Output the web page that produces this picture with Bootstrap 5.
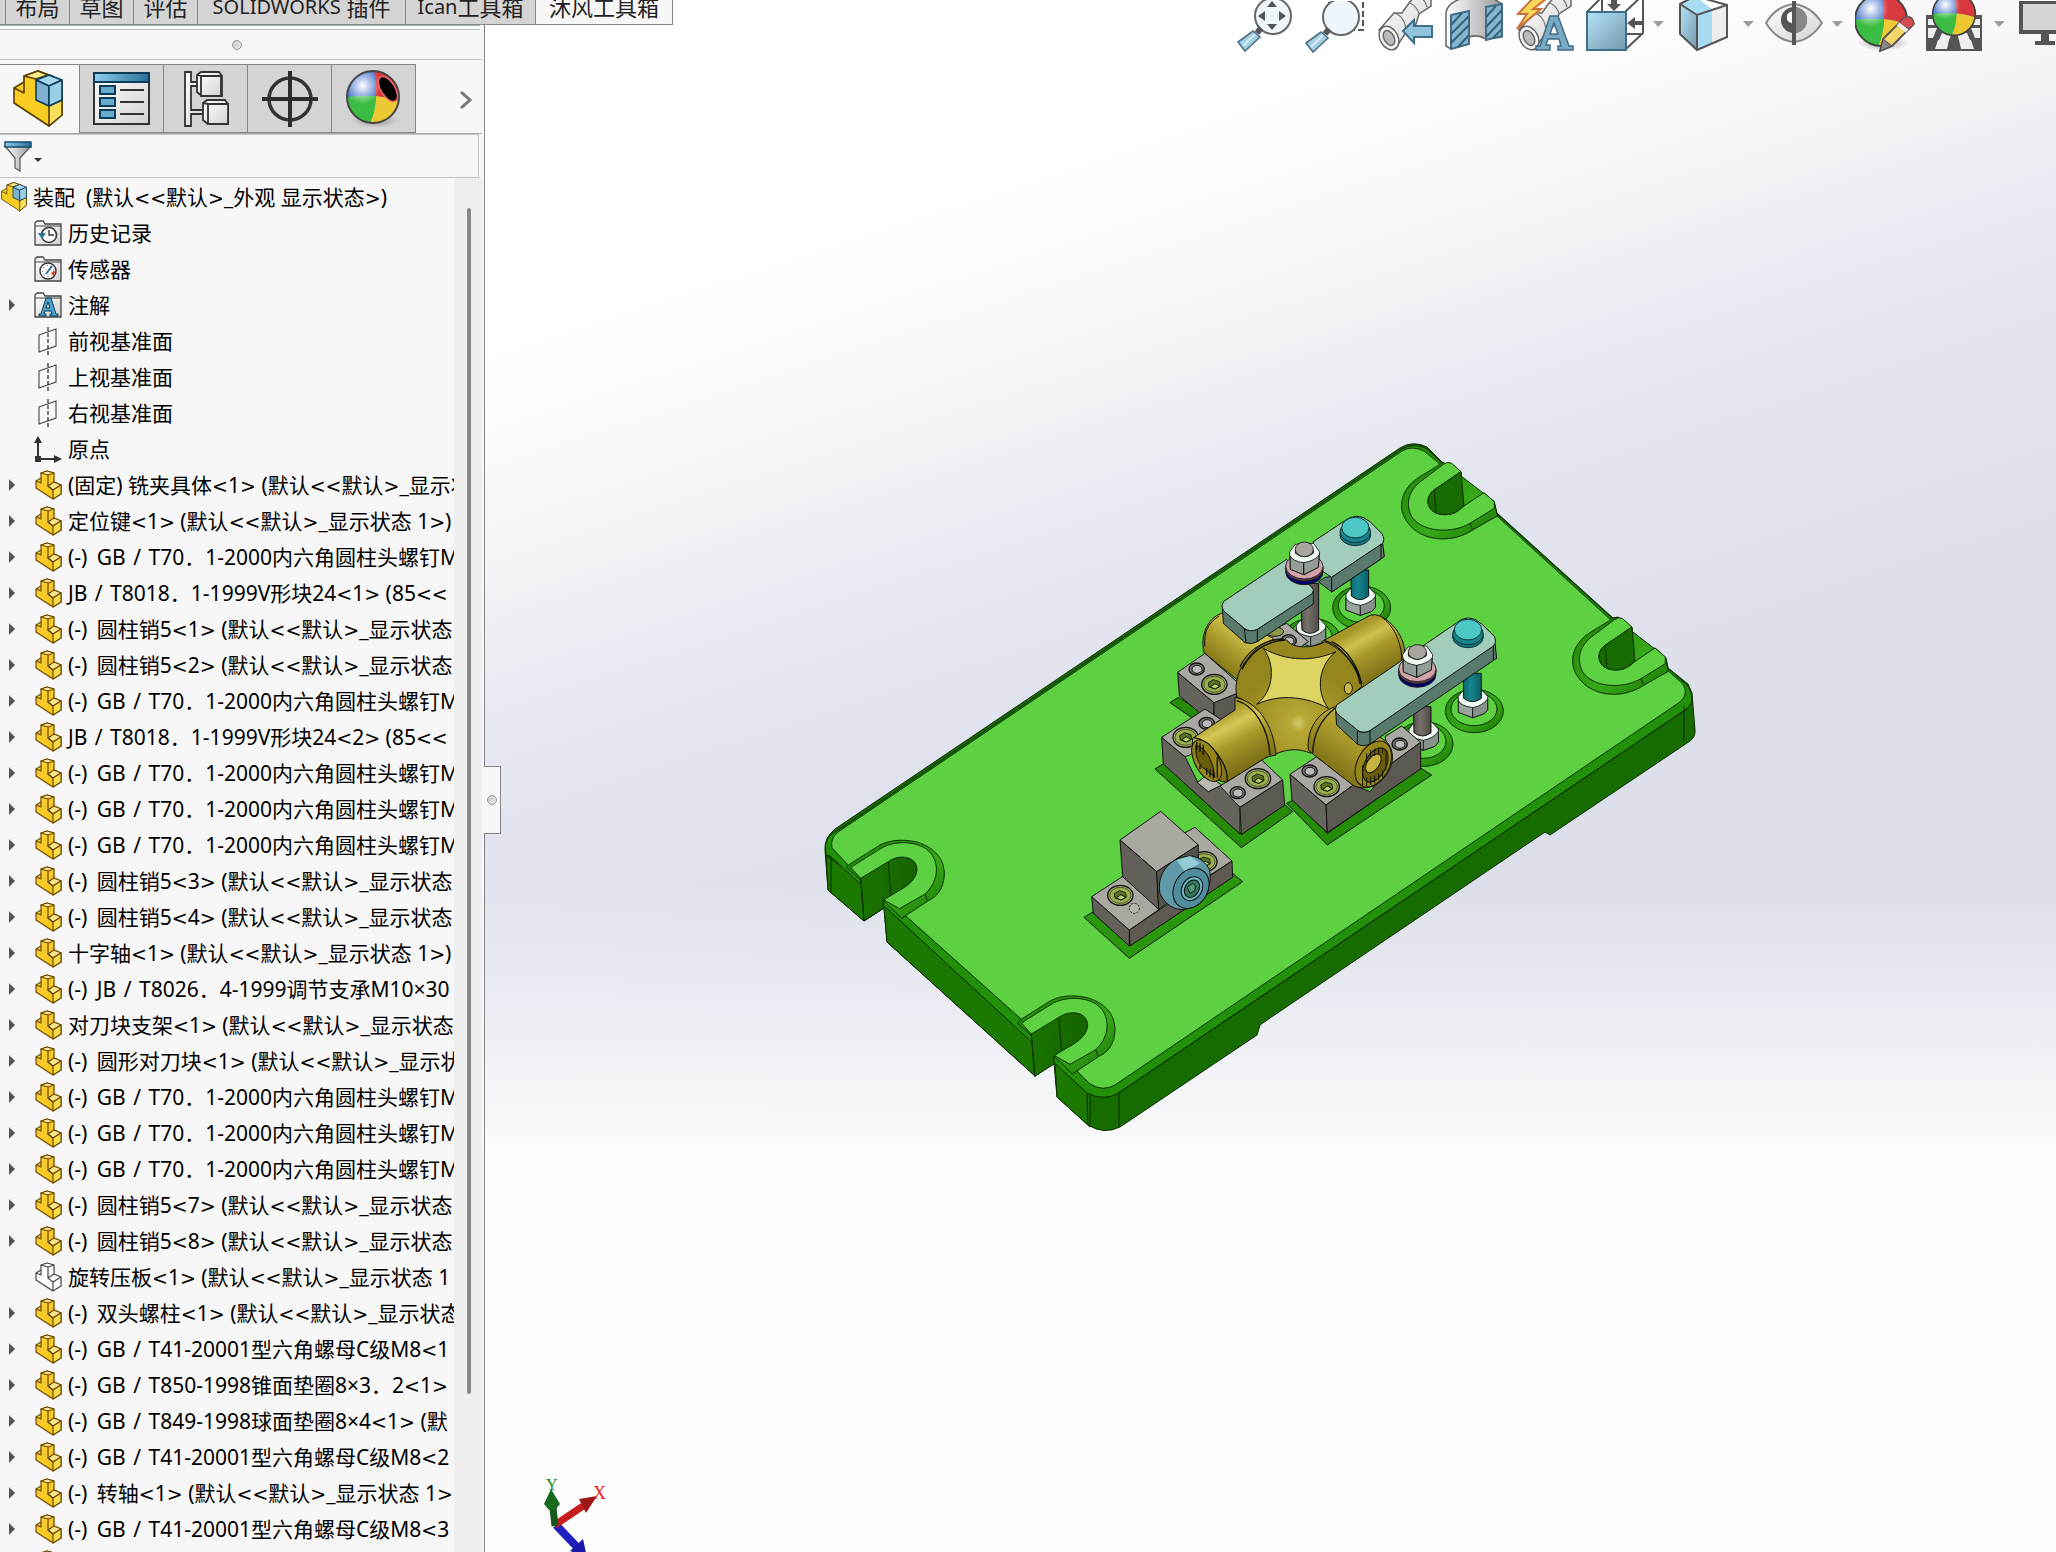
<!DOCTYPE html>
<html lang="zh-CN">
<head>
<meta charset="utf-8">
<meta name="viewport" content="width=device-width, initial-scale=1">
<title>装配 - SOLIDWORKS</title>
<link href="https://cdn.jsdelivr.net/npm/bootstrap@5.3.0/dist/css/bootstrap.min.css" rel="stylesheet">
<style>
:root{--line:#868686;--soft:#c2c2c2;--panel:#f7f7f7;--tab:#d4d4d4}
body{font-family:"Noto Sans","Noto Sans CJK SC",sans-serif;color:#000;background:#fff}
button{font:inherit;color:inherit}
.side{width:485px;background:var(--panel);border-right:1px solid var(--line);z-index:2}
.ribbon{height:25px;width:max-content;background:var(--tab);z-index:3}
.ribbon button{height:25px;border:0;border-left:1px solid var(--line);border-bottom:1px solid var(--line);background:var(--tab);color:#222;font-size:22px;line-height:34px;padding:0 10px;white-space:nowrap;overflow:hidden;display:flex;align-items:flex-end;justify-content:center}
.ribbon button.active{background:var(--panel);border-right:1px solid var(--line)}
.ribbon .first{width:5px;border-left:0;padding:0}
.latin{font-size:20px}
.w-short{width:64px}.w-plug{width:208px}.w-ican{width:130px}.w-mf{width:138px}
.grip{height:30px;margin-right:2px;padding-right:8px;border-bottom:1px solid var(--soft)}
.grip-line{border-top:1px solid #9fb3b5;border-bottom:1px solid var(--soft);height:5px;flex:none}
.knob{width:10px;height:10px;border:1px solid #999;border-radius:50%;background:linear-gradient(135deg,#c4c4c4,#eee)}
.mtabs{height:70px;margin:4px 2px 0 0;border-bottom:1px solid #aaa}
.mtabs button{width:84px;padding:0;border:1px solid var(--line);border-left-width:0;background:var(--tab)}
.mtabs button.active{width:80px;padding-right:3px;background:var(--panel);border-bottom:0}
.mtabs button.more{margin-left:auto;width:32px;border:0;background:none}
.filter{height:44px;margin-right:5px;border:1px solid var(--soft);border-left:0}
.filter button{border:0;background:none;padding:0 0 0 4px}
.tree{overflow:hidden;padding-top:1px}
.node{height:36px;font-size:21px;line-height:36px;white-space:nowrap;color:#000;text-decoration:none;padding-left:8px}
.node.root{padding-left:0}
.node .arrow{width:26px;flex:none}
.node .ico{width:34px;flex:none}
.node.root .ico{width:33px}
.node svg{display:block}
.cmp{font-family:"DejaVu Sans",sans-serif;font-size:19px;line-height:1}
.slash{margin:0 2px}
.fix{margin-right:4px}
.bar{width:28px;background:#efefef;margin-right:2px;flex:none;padding:30px 0 158px}
.thumb{width:4px;height:100%;margin-left:13px;background:#888;border-radius:2px}
.handle{right:-17px;top:766px;width:17px;height:68px;border:1px solid var(--line);border-left:0;background:var(--panel);padding:0}
.view{background:linear-gradient(180deg,rgba(253,253,254,0) 57%,rgba(253,253,254,.5) 66%,#fdfdfe 75%),linear-gradient(162deg,#fff 16%,#f8f8fa 25%,#ecedf3 32%,#e2e5ef 40%,#dde0eb 52%,#dcdfea 60%)}
.tools{height:60px}
.tools button{border:0;background:none;padding:0;width:70px;height:60px;overflow:hidden;display:flex;align-items:flex-start;flex:none}
.tools button svg{flex:none}
.tools button.drop{width:90px}
.tools button.cut{width:41px}
.triad{left:50px;bottom:0}
</style>
<script src="https://cdn.jsdelivr.net/npm/bootstrap@5.3.0/dist/js/bootstrap.bundle.min.js"></script>
</head>
<body class="vh-100 overflow-hidden d-flex">
<svg width="0" height="0" class="position-absolute" aria-hidden="true">
<defs>
<linearGradient id="gy" x1="0" y1="0" x2="1" y2="1"><stop offset="0" stop-color="#fdd23a"/><stop offset="1" stop-color="#f2bf10"/></linearGradient>
<linearGradient id="bl" x1="0" y1="0" x2="1" y2="1"><stop offset="0" stop-color="#b4e2f7"/><stop offset="1" stop-color="#7499ae"/></linearGradient>
<linearGradient id="gr" x1="0" y1="0" x2="1" y2="1"><stop offset="0" stop-color="#fff"/><stop offset="1" stop-color="#d2d2d2"/></linearGradient>
<linearGradient id="hd" x1="0" x2="1"><stop offset="0" stop-color="#8fd0ee"/><stop offset="1" stop-color="#276f95"/></linearGradient>
<linearGradient id="gf" x1="0" x2="1"><stop offset="0" stop-color="#fff"/><stop offset="1" stop-color="#999"/></linearGradient>
<radialGradient id="hl" cx=".3" cy=".28" r=".35"><stop offset="0" stop-color="#fff"/><stop offset="1" stop-color="#fff" stop-opacity="0"/></radialGradient>
<radialGradient id="sh"><stop offset="0" stop-color="#666" stop-opacity=".7"/><stop offset="1" stop-color="#888" stop-opacity="0"/></radialGradient>
<symbol id="part" viewBox="0 0 28 30"><g stroke="#6b4a00" stroke-width="1.2" stroke-linejoin="round"><path fill="url(#gy)" d="M2 11 7 8V3L13 1 20 3V12L27 15V24L19 29 2 18Z"/><path fill="#fbe98c" d="M7 3 13 1 20 3 14 5Z"/><path fill="#fbe98c" d="M14 16 20 12 27 15 19 20Z"/><path fill="#f9dc4b" d="M19 20 27 15V24L19 29Z"/><path fill="none" d="M14 5V16L19 20M2 11 7 13V8"/></g></symbol>
<symbol id="ghost" viewBox="0 0 28 30"><g stroke="#444" stroke-width="1.2" stroke-linejoin="round" fill="#fff"><path d="M2 11 7 8V3L13 1 20 3V12L27 15V24L19 29 2 18Z"/><path fill="none" d="M7 3 14 5 20 3M14 5V16L19 20 27 15M14 16 20 12M19 20V29M2 11 7 13V8"/></g></symbol>
<symbol id="asm" viewBox="0 0 52 58"><g stroke="#5a3d00" stroke-width="1.6" stroke-linejoin="round"><path fill="#f8cc22" d="M2 18 12 12V6L26 1 40 6 50 12V45L37 56 2 33Z"/><path fill="#fbe98c" d="M12 6 26 1 36 5 24 9Z"/><path fill="#f9e05c" d="M37 36 50 30V45L37 56Z"/><path fill="none" d="M2 18 12 23V12"/></g><g stroke="#0a3a5c" stroke-width="1.6" stroke-linejoin="round"><path fill="#a7d6ee" d="M24 10 37 5 50 10 37 16Z"/><path fill="#7eb0d0" d="M24 10 37 16V36L24 30Z"/><path fill="#9acfe8" d="M37 16 50 10V30L37 36Z"/></g></symbol>
<symbol id="folder" viewBox="0 0 28 26"><path d="M1 25V3L3 1H9L11 4H27V25Z" fill="url(#gr)" stroke="#444" stroke-width="1.3"/><path d="M1 6H27" stroke="#444"/></symbol>
<symbol id="plane" viewBox="0 0 28 30"><path d="M5 9 22 3V20L5 26Z" fill="#fafafa" stroke="#444" stroke-width="1.1"/><path d="M14 1V29" stroke="#222" stroke-width="1.2" stroke-dasharray="4 2"/></symbol>
<symbol id="origin" viewBox="0 0 28 30"><path d="M4 25V8M4 25H21" stroke="#333" stroke-width="2"/><path d="M4 2 8 9H0ZM28 25 20 21V29ZM1 22H7V28H1Z" fill="#333"/></symbol>
<symbol id="ball" viewBox="0 0 56 56"><circle cx="28" cy="28" r="26" fill="#4573cc"/><path d="M29 2A26 26 0 0 1 54 32Q42 28 31 27Q31 12 29 2Z" fill="#d9383f"/><path d="M31 27Q42 28 54 32A26 26 0 0 1 25 54Q30 42 31 27Z" fill="#ecc933"/><path d="M2 28Q16 26 31 27Q31 42 25 54A26 26 0 0 1 2 28Z" fill="#3bbd43"/><circle cx="28" cy="28" r="26" fill="url(#hl)" stroke="#444" stroke-width="2"/></symbol>
<symbol id="tube" viewBox="0 0 60 54"><path d="M4 30 19 13H27L34 3 42-6H56V6L44 14 41 24 30 34 20 49Z" fill="url(#gr)" stroke="#666" stroke-width="1.5"/><path d="M19 13Q30 16 31 31M34 3Q40 4 44 13M42-3Q50-2 52 7" fill="none" stroke="#777" stroke-width="1.2"/><ellipse cx="14" cy="38" rx="9" ry="12.500" transform="rotate(-28 14 38)" fill="#f7f7f7" stroke="#666" stroke-width="1.5"/><ellipse cx="14" cy="38" rx="5" ry="8" transform="rotate(-28 14 38)" fill="#bbb" stroke="#666" stroke-width="1.5"/></symbol>
<symbol id="glass" viewBox="0 0 60 54"><circle cx="38" cy="16" r="18" fill="#eef6fb" stroke="#666" stroke-width="2"/><path d="M26 28 22 33" stroke="#555" stroke-width="6"/><path d="M3 42 18 31 25 37 10 51Z" fill="#a3cfe3" stroke="#4f7288" stroke-width="1.600"/><path d="M8 46 20 34" stroke="#d8eef8" stroke-width="2"/></symbol>
</defs></svg>

<aside class="side d-flex flex-column flex-shrink-0 position-relative vh-100">
 <nav class="ribbon d-flex position-relative flex-shrink-0" aria-label="命令管理器">
  <button class="first" aria-label="特征"></button><button class="w-short">布局</button><button class="w-short">草图</button><button class="w-short">评估</button><button class="w-plug"><span class="latin">SOLIDWORKS</span>&nbsp;插件</button><button class="w-ican"><span class="latin">Ican</span>工具箱</button><button class="w-mf active">沐风工具箱</button>
 </nav>
 <div class="grip-line me-1"></div>
 <div class="grip d-flex justify-content-center align-items-center flex-shrink-0"><span class="knob"></span></div>
 <div class="mtabs d-flex flex-shrink-0" role="tablist">
  <button class="active" role="tab" aria-label="设计树"><svg width="52" height="58"><use href="#asm"/></svg></button>
  <button role="tab" aria-label="属性"><svg width="58" height="54" viewBox="0 0 58 54"><rect x="1" y="1" width="55" height="51" fill="url(#gr)" stroke="#333" stroke-width="2"/><rect x="1" y="1" width="55" height="9" fill="url(#hd)" stroke="#0d3c58" stroke-width="2"/><g fill="#65acce" stroke="#0d3c58" stroke-width="2"><path d="M7 14H22V22H7ZM7 26H22V34H7ZM7 38H22V46H7Z"/></g><path d="M27 18H51M27 30H51M27 42H51" stroke="#333" stroke-width="2"/></svg></button>
  <button role="tab" aria-label="配置"><svg width="46" height="58" viewBox="0 0 46 58"><g fill="url(#gr)" stroke="#333" stroke-width="1.800"><path d="M2 2H8V12H16V16H8V40H20V44H8V56H2Z"/><path d="M14 5 18 2H36L39 6V26H19L14 22Z"/><path d="M18 6H38V26H18ZM14 5 18 6" /><path d="M20 33 24 30H42L45 34V54H25L20 50Z"/><path d="M25 34H45V54H25ZM20 33 25 34"/></g></svg></button>
  <button role="tab" aria-label="尺寸"><svg width="58" height="58" viewBox="0 0 58 58"><circle cx="29" cy="29" r="21" fill="none" stroke="#333" stroke-width="3.500"/><path d="M29 1V57M1 29H57" stroke="#2c2c2c" stroke-width="4"/></svg></button>
  <button role="tab" aria-label="显示"><svg width="58" height="60" viewBox="0 0 58 60"><ellipse cx="30" cy="51" rx="24" ry="8" fill="url(#sh)"/><use href="#ball" width="56" height="56"/><ellipse cx="43" cy="20" rx="7" ry="14" transform="rotate(-32 43 20)" fill="#000" stroke="#f3666a" stroke-width="1.500"/></svg></button>
  <button class="more" aria-label="更多"><svg width="14" height="20" viewBox="0 0 14 20"><path d="M2 2 11 10 2 18" fill="none" stroke="#777" stroke-width="3"/></svg></button>
 </div>
 <div class="filter d-flex flex-shrink-0"><button aria-label="过滤器"><svg width="40" height="32" viewBox="0 0 40 32"><path d="M1 6 11 18V28L16 31V18L27 6Z" fill="url(#gf)" stroke="#555" stroke-width="1.200"/><path d="M1 2H27V7H1Z" fill="url(#hd)" stroke="#164b6a" stroke-width="1.400"/><path d="M30 18H38L34 22Z" fill="#333"/></svg></button></div>
 <div class="d-flex flex-grow-1 overflow-hidden">
  <div class="tree flex-grow-1" id="tree" role="tree"></div>
  <div class="bar"><div class="thumb"></div></div>
 </div>
 <button class="handle position-absolute d-flex align-items-center justify-content-center" aria-label="折叠面板"><span class="knob"></span></button>
</aside>

<main class="view d-flex flex-column flex-grow-1 position-relative overflow-hidden">
 <div class="tools d-flex justify-content-end flex-shrink-0">
  <button aria-label="整屏显示全图"><svg width="60" height="54"><use href="#glass"/><path d="M37 1 42 7H32ZM37 30 42 24H32ZM23 16 30 11V21ZM51 16 44 11V21Z" fill="#555"/></svg></button>
  <button aria-label="局部放大"><svg width="62" height="54"><path d="M58 2V30H38M24 2V10" fill="none" stroke="#555" stroke-width="2" stroke-dasharray="6 3"/><use href="#glass" width="60" height="54" x="-2" y="1"/></svg></button>
  <button aria-label="上一视图"><svg width="60" height="54"><use href="#tube"/><path d="M28 31 39 20V26H57V37H39V43Z" fill="#8fc4dd" stroke="#42708a" stroke-width="2"/></svg></button>
  <button aria-label="剖面视图"><svg width="60" height="54" viewBox="0 0 60 54"><path d="M1 12Q4 0 24-3H46L57 4V37L41 39Q32 34 24 37V44L6 49 1 46Z" fill="url(#gf)" stroke="#666" stroke-width="1.500"/><path d="M6 15 24 11V44L6 49ZM41 7 57 4V36L41 40Z" fill="#84b6cf" stroke="#3f6e88" stroke-width="2"/><path d="M6 25 17 13M6 34 24 16M6 43 24 25M13 47 24 35M41 17 51 6M41 27 57 10M41 37 57 20M48 38 57 29" stroke="#34627b" stroke-width="2"/></svg></button>
  <button aria-label="动态注解视图"><svg width="60" height="54" viewBox="0 0 60 54"><use href="#tube" width="60" height="54"/><path d="M20-4 3 14H12L2 29 26 9H18L35-4Z" fill="#fbd85a" stroke="#c9713a" stroke-width="2"/><path d="M35 16H43L54 46H58V50H43V46H46L44 39H33L31 45H35V50H21V46H25ZM35 34H43L39 23Z" fill="#7aa9c2" stroke="#3f6e88" stroke-width="1.500"/></svg></button>
  <button class="drop" aria-label="视图定向"><svg width="86" height="54" viewBox="0 0 86 54"><path d="M2 12 17-3H58V33L40 50M17-3V12M40 12 58-5M40 34H58" fill="#fff" fill-opacity=".5" stroke="#555" stroke-width="2"/><rect x="2" y="12" width="39" height="38" fill="url(#bl)" stroke="#3f6e88" stroke-width="2"/><path d="M26-2H32V4H36L29 11 22 4H26ZM58 21H50V17L42 23 50 29V25H58Z" fill="#555"/><path d="M68 21H79L73 27Z" fill="#9a9da3"/></svg></button>
  <button class="drop" aria-label="显示样式"><svg width="86" height="54" viewBox="0 0 86 54"><path d="M5 4 22 15 52 5V37L22 50 5 34Z" fill="#eee"/><path d="M5 4 20-4 38 10 22 15ZM22 15 37 10V43L22 50Z" fill="#a8dcf2"/><path d="M5 4 22 15V50L5 34Z" fill="url(#bl)"/><path d="M5 4 20-4 52 5V37L22 50 5 34ZM5 4 22 15 52 5M22 15V50" fill="none" stroke="#555" stroke-width="2"/><path d="M68 21H79L73 27Z" fill="#9a9da3"/></svg></button>
  <button class="drop" aria-label="隐藏项目"><svg width="86" height="54" viewBox="0 0 86 54"><path d="M1 23Q11 6 29 4Q46 6 57 23Q46 40 29 42Q11 40 1 23Z" fill="url(#gr)" stroke="#888" stroke-width="2"/><circle cx="29" cy="20" r="13" fill="#555"/><path d="M29 7A13 13 0 0 1 29 33Z" fill="#888"/><path d="M29 11Q20 12 22 20Q26 25 29 22Z" fill="#fff"/><path d="M29 1V45" stroke="#555" stroke-width="4"/><path d="M67 21H78L72 27Z" fill="#9a9da3"/></svg></button>
  <button aria-label="编辑外观"><svg width="62" height="54" viewBox="0 0 62 54"><ellipse cx="28" cy="43" rx="26" ry="8" fill="url(#sh)"/><use href="#ball" x="-2" y="-8" width="56" height="56"/><path d="M25 51 28 39 49 18Q57 14 59 24L37 46Z" fill="#f3d66a" stroke="#555" stroke-width="1.800"/><path d="M49 18Q57 14 59 24L54 29 44 23Z" fill="#d24b50" stroke="#555"/><path d="M25 51 28 39 37 46Z" fill="#888" stroke="#444"/><path d="M43 24 52 31" stroke="#eee" stroke-width="4"/></svg></button>
  <button class="drop" aria-label="应用布景"><svg width="86" height="54" viewBox="0 0 86 54"><path d="M1 15H57V51H1Z" fill="#555"/><path d="M3 19H12V25H3ZM46 19H55V25H46ZM3 28H12L8 38H3ZM46 28H55V38H50ZM17 33H27L24 40H14ZM32 33H42L45 40H34ZM13 40H24L22 49H10ZM34 40H46L49 49H36Z" fill="#eee"/><use href="#ball" x="6" y="-9" width="46" height="46"/><path d="M69 21H80L74 27Z" fill="#9a9da3"/></svg></button>
  <button class="cut" aria-label="视图设定"><svg width="60" height="54" viewBox="0 0 60 54"><rect x="4" y="1" width="56" height="33" fill="#555"/><rect x="8" y="4" width="52" height="26" fill="#d6d6d6"/><path d="M26 34H34V41H40V45H20V41H26Z" fill="#555"/></svg></button>
 </div>
 <div class="flex-grow-1 d-flex justify-content-center align-items-center">
 <svg width="920" height="752" viewBox="811 430 920 752" role="img" aria-label="铣夹具体装配模型">
 <defs>
  <linearGradient id="cyA" gradientUnits="userSpaceOnUse" x1="225" y1="680" x2="315" y2="850"><stop offset="0" stop-color="#a69527"/><stop offset=".25" stop-color="#d5c955"/><stop offset=".5" stop-color="#a8982a"/><stop offset="1" stop-color="#756812"/></linearGradient>
  <linearGradient id="cyB" gradientUnits="userSpaceOnUse" x1="640" y1="420" x2="720" y2="560"><stop offset="0" stop-color="#a69527"/><stop offset=".25" stop-color="#cfc24d"/><stop offset=".5" stop-color="#a8982a"/><stop offset="1" stop-color="#7d7015"/></linearGradient>
  <linearGradient id="cyC" gradientUnits="userSpaceOnUse" x1="300" y1="420" x2="220" y2="520"><stop offset="0" stop-color="#d0c44e"/><stop offset=".5" stop-color="#a8982a"/><stop offset="1" stop-color="#857718"/></linearGradient>
  <linearGradient id="cyD" gradientUnits="userSpaceOnUse" x1="650" y1="710" x2="570" y2="820"><stop offset="0" stop-color="#b8aa36"/><stop offset=".4" stop-color="#a8982a"/><stop offset="1" stop-color="#857718"/></linearGradient>
  <radialGradient id="sad" gradientUnits="userSpaceOnUse" cx="475" cy="700" r="170"><stop offset="0" stop-color="#d8cc70"/><stop offset=".15" stop-color="#b7a836"/><stop offset="1" stop-color="#94861c"/></radialGradient>
  <linearGradient id="wall" x1="0" x2="1"><stop offset="0" stop-color="#1a7400"/><stop offset="1" stop-color="#156300"/></linearGradient>
  <linearGradient id="teal" x1="0" x2="1"><stop offset="0" stop-color="#0d6670"/><stop offset=".4" stop-color="#16868e"/><stop offset="1" stop-color="#0c5e66"/></linearGradient>
  <linearGradient id="rod" x1="0" x2="1"><stop offset="0" stop-color="#55504c"/><stop offset=".4" stop-color="#77716b"/><stop offset="1" stop-color="#4e4a46"/></linearGradient>
  <linearGradient id="ringg" x1="0" y1="0" x2="1" y2="1"><stop offset="0" stop-color="#1f8304"/><stop offset=".6" stop-color="#37a818"/><stop offset="1" stop-color="#187200"/></linearGradient>
  <g id="farslot" stroke="#0b2d00" stroke-width="3"><path fill="url(#ringg)" d="M190 97 120 140C60 175 50 240 85 280C120 330 210 345 278 300L352 258 343 215Z"/><path fill="#5ed142" d="M130 148 190 103Q203 93 215 100L243 125 165 178C130 200 138 254 195 254C225 254 240 238 252 228L312 188 343 215V235L270 280C220 310 130 310 95 260C75 220 85 180 130 148Z"/><path fill="#176b00" d="M243 125 165 178C130 200 138 254 195 254C225 254 235 240 252 228Z"/><path fill="none" d="M163 180 167 246M270 281 278 300"/></g>
  <g id="nearslot" stroke="#0b2d00" stroke-width="3"><path fill="url(#ringg)" d="M110 262 120 252 210 195C250 175 290 180 320 186C380 205 403 240 403 285C400 330 380 350 355 362L275 415 240 380Z"/><path fill="#5ed142" d="M122 262 210 207C250 180 330 180 363 220C392 260 380 310 345 342L268 386 222 360 152 295Z"/><path fill="url(#wall)" d="M152 295 235 245C270 220 322 230 321 270C318 300 290 320 265 333L220 360V385L162 422Z"/><path fill="none" d="M235 245 242 345M345 342 352 362M152 295 162 422"/></g>
  <g id="scr"><ellipse rx="38" ry="30" fill="#aab06a" stroke="#111" stroke-width="4"/><ellipse rx="32" ry="24" fill="#98b04a" stroke="#222" stroke-width="2"/><path d="M-18-5-3-14 16-8 18 6 2 14-16 8Z" fill="#5c7420" stroke="#111" stroke-width="2.500"/><path d="M-12 8 2-2 16 6 2 14Z" fill="#b9d466"/></g>
  <g id="pin"><ellipse rx="23" ry="18" fill="#777" stroke="#111" stroke-width="4"/><ellipse cx="1" cy="1" rx="15" ry="12" fill="#bbb" stroke="#111" stroke-width="3"/></g>
  <g id="nut" stroke="#111" stroke-width="2.500" stroke-linejoin="round"><path d="M-43-18-28-36 24-40 45-18V22L35 34 0 46-43 30Z" fill="#eefaf2"/><path d="M-43-6Q-38 10 0 16V46L-43 30Z" fill="#98a59b"/><path d="M0 16Q30 10 45-10V22L35 34 0 46Z" fill="#87938a"/></g>
  <g id="stack" stroke="#111" stroke-width="2.500"><ellipse cy="28" rx="56" ry="38" fill="#04046e"/><ellipse cy="18" rx="57" ry="38" fill="#5a3c48"/><ellipse cy="11" rx="56" ry="38" fill="#cfa3a9"/><path d="M-44-32-28-55 28-58 46-32 42 14 0 36-42 20Z" fill="#f0faf3"/><path d="M-42-20Q-35-4-2 0V36L-42 20ZM-2 0Q30-5 44-22L42 14 -2 36Z" fill="#929e95"/><path d="M-27-38V-28Q0-8 27-28V-38Z" fill="#6e6a66"/><ellipse cy="-40" rx="27" ry="22" fill="#a9a49e"/></g>
  <g id="cap" stroke="#0a3035" stroke-width="3"><ellipse cy="16" rx="46" ry="32" fill="#17797f"/><ellipse cy="7" rx="46" ry="32" fill="#17858c"/><ellipse cy="-6" rx="41" ry="31" fill="#4bc8c6"/></g>
 </defs>
 <g stroke="#0b2d00" stroke-width="1" stroke-linejoin="round">
  <path fill="#176c00" d="M825 850Q824 838 835 829L1400 448Q1413 440 1427 447L1442 462 1461 472 1463 506 1484 493 1494 502 1497 513 1613 618 1618 617 1632 628 1635 660 1655 648 1666 658 1668 668 1688 684 1692 693 1695 730Q1696 738 1687 743L1550 835 1545 832 1270 1018 1260 1025 1257 1035 1120 1127Q1104 1135 1088 1125L1057 1097 1054 1063 1035 1076 887 942 884 908 864 921 828 890Z"/>
  <path fill="#1b7800" d="M826 855 850 873 884 905 907 927 1020 1030 1054 1060 1090 1094V1127L1057 1097 1055 1063 1035 1076 887 942 884 908 864 921 828 890Z"/>
  <path fill="#23900a" d="M826 855Q822 836 840 829L1402 449Q1414 442 1427 449L1497 514 1613 619 1688 686Q1696 700 1688 708L1117 1094Q1103 1101 1087 1093L830 856Z"/>
  <path fill="#5ed142" d="M832 848Q830 838 838 832L1402 451Q1412 445 1424 451L1440 464 1497 516 1612 621 1683 684Q1689 694 1680 702L1115 1085Q1103 1092 1090 1084L1077 1071 1021 1019 907 917 850 867Z"/>
  <path fill="none" d="M1684 706V742M1119 1093V1127M1087 1094 1088 1125M831 858V892M1117 1094 1688 708"/>
 </g>
 <g transform="translate(1380 430) scale(.33333)"><use href="#farslot"/><use href="#farslot" x="513" y="466"/></g>
 <g transform="translate(810 780) scale(.33333)"><use href="#nearslot"/><use href="#nearslot" x="512" y="467"/>
  <g stroke="#111" stroke-width="3" stroke-linejoin="round"><path fill="#2a960c" d="M822 412 850 395 958 450 1268 280 1298 305 958 535Z"/>
   <path fill="#aaa9a1" d="M1125 158 1155 142 1266 243 1190 292 1100 200Z"/><path fill="#5e5a52" d="M1266 243 1268 292 960 498 958 450Z"/><path fill="#63605a" d="M845 350 958 450V498L850 400Z"/><path fill="#aaa9a1" d="M845 350 940 288 1048 388 958 450Z"/>
   <use href="#scr" x="1183" y="245"/><path fill="#aaa9a1" d="M930 180 1052 94 1165 195 1040 275Z"/><path fill="#63605a" d="M930 180 1040 275 1046 388 938 290Z"/><path fill="#57534c" d="M1040 275 1165 195V300L1046 388Z"/>
   <use href="#scr" x="931" y="346"/><circle cx="973" cy="385" r="15" fill="#b5b4ad" stroke-dasharray="6 4"/>
   <path fill="#609aa8" d="M1125 230C1070 240 1040 290 1050 340C1065 375 1095 392 1125 388C1180 380 1210 320 1198 268C1180 235 1150 222 1125 230Z"/><path fill="#94ccd4" stroke="none" d="M1100 240 1140 228 1170 250 1125 275Z"/><ellipse cx="1143" cy="325" rx="50" ry="64" transform="rotate(32 1143 325)" fill="#4f8c9d"/><ellipse cx="1146" cy="326" rx="30" ry="38" transform="rotate(32 1146 326)" fill="#6fb3bf"/><ellipse cx="1146" cy="326" rx="21" ry="28" transform="rotate(32 1146 326)" fill="#33795f"/><path d="M1132 322 1148 310 1157 318 1154 333 1140 340Z" fill="#4f9c78"/></g>
 </g>
 <g transform="translate(1140 490) scale(.33333)" stroke="#111" stroke-width="3" stroke-linejoin="round">
  <g stroke="#0b2d00"><ellipse cx="515" cy="445" rx="85" ry="60" fill="url(#ringg)"/><ellipse cx="512" cy="440" rx="64" ry="46" fill="#5ed142"/><ellipse cx="665" cy="353" rx="87" ry="65" fill="url(#ringg)"/><ellipse cx="664" cy="347" rx="69" ry="50" fill="#5ed142"/><ellipse cx="852" cy="762" rx="87" ry="67" fill="url(#ringg)"/><ellipse cx="850" cy="754" rx="68" ry="51" fill="#5ed142"/><ellipse cx="1003" cy="663" rx="87" ry="65" fill="url(#ringg)"/><ellipse cx="1002" cy="657" rx="69" ry="50" fill="#5ed142"/></g>
  <use href="#nut" x="661" y="330"/><use href="#nut" x="998" y="637"/><use href="#nut" x="512" y="424"/><use href="#nut" x="850" y="735"/>
  <path fill="url(#teal)" d="M632 240H686V318Q660 340 634 318Z"/><path fill="url(#teal)" d="M970 550H1024V625Q998 645 971 625Z"/><path fill="url(#rod)" d="M480 280H536V420Q510 440 486 420Z"/><path fill="url(#rod)" d="M820 650H873V728Q848 748 822 728Z"/>
  <path fill="#258c08" d="M90 638 115 622 225 690 180 700Z"/><path fill="#258c08" d="M45 837 72 820 300 1030 430 940 458 965 304 1073Z"/><path fill="#258c08" d="M440 940 460 930 562 1030 843 835 875 855 562 1065Z"/>
  <path fill="#aaa8a2" d="M350 440 440 400 505 455 440 500Z"/><use href="#pin" x="446" y="452"/><ellipse cx="405" cy="425" rx="26" ry="14" fill="#8d9a45"/>
  <path fill="#66635c" d="M113 547 222 638V705L118 617Z"/><path fill="#5c5852" d="M222 638 304 605V660L222 705Z"/><path fill="#aaa8a2" d="M113 547 195 490 290 575 304 605 222 638Z"/><use href="#pin" x="170" y="537"/><use href="#scr" x="223" y="583"/>
  <path fill="#66635c" d="M65 742 135 800 175 880 205 905 245 885 300 952V1032L70 822Z"/><path fill="#aaa8a2" d="M65 742 195 657 260 700 150 795 135 800Z"/><path fill="#aaa8a2" d="M240 888 365 810 428 870 300 952Z"/><path fill="#5c5852" d="M300 952 428 870 434 945 304 1034Z"/><path fill="#bbb9b3" d="M172 878 200 855 245 885 205 905Z"/><use href="#pin" x="200" y="700"/><use href="#scr" x="137" y="742"/><use href="#scr" x="354" y="866"/><use href="#pin" x="293" y="908"/>
  <path fill="#aaa8a2" d="M450 853 530 800 640 885 558 945Z"/><path fill="#aaa8a2" d="M735 740 785 708 842 757 755 820Z"/><path fill="#66635c" d="M450 853 558 945 562 1028 456 930Z"/><path fill="#5c5852" d="M558 945 640 885 690 905 755 820 842 757V837L562 1028Z"/><use href="#pin" x="509" y="843"/><use href="#scr" x="560" y="890"/><use href="#pin" x="779" y="762"/>
  <path fill="url(#cyC)" d="M245 370C200 385 180 440 192 488L290 568 400 445Z"/><path fill="none" d="M238 378C200 400 192 430 194 470"/>
  <path fill="url(#cyB)" d="M545 455 690 376Q705 370 725 380C770 405 805 460 792 520L660 600Z"/><path fill="none" d="M725 382C755 400 785 450 785 510"/>
  <path fill="url(#sad)" d="M300 540C340 470 385 440 440 450C460 478 520 475 555 455C615 480 660 540 665 590L590 650C540 690 520 730 512 790C480 775 440 775 400 795C400 720 360 650 290 620C285 590 290 565 300 540Z"/>
  <path fill="#ddd462" d="M370 475C440 515 520 515 588 485C530 530 530 610 565 655C500 620 420 610 350 643C405 600 405 520 370 475Z"/>
  <g fill="none"><path d="M300 530C320 490 360 450 430 446M306 538C330 490 370 455 435 450" stroke-width="4"/><path d="M555 452C600 465 655 530 660 582M575 455C620 475 655 530 665 582" stroke-width="4"/><ellipse cx="625" cy="595" rx="12" ry="17" fill="#c8ba48"/></g>
  <path fill="url(#cyA)" d="M158 745 285 660 285 622C350 635 400 700 408 795L385 800 372 806 262 875C230 885 150 810 158 745Z"/><path fill="none" stroke-width="4" d="M290 632C340 645 385 710 390 795M160 742C210 750 265 820 262 875"/><ellipse cx="200" cy="812" rx="36" ry="68" transform="rotate(-28 200 812)" fill="#978718"/><path fill="#6b5e08" d="M168 765Q215 780 225 862L185 830Q162 800 168 765Z"/><path d="M170 756V780M180 758V786M190 765V795M200 835V855M210 838V862M220 840V868M180 825V838M232 800V865" stroke-width="4"/>
  <path fill="url(#cyD)" d="M585 650C530 670 500 720 505 780L525 797 638 885C660 900 700 895 720 875C760 840 770 790 740 755L640 690Z"/><path fill="none" stroke-width="4" d="M585 655C540 690 520 740 518 788"/><ellipse cx="700" cy="822" rx="48" ry="74" transform="rotate(28 700 822)" fill="#978718"/><ellipse cx="706" cy="825" rx="32" ry="55" transform="rotate(28 706 825)" fill="#6b5e08"/><ellipse cx="700" cy="820" rx="18" ry="32" transform="rotate(35 700 820)" fill="#c4b33e"/><path d="M668 825V885M680 790V815M692 780V805M704 775V798M716 772V792M728 772V790M680 862V888M692 860V885M704 856V880M716 850V872M728 840V862M738 780V840" stroke-width="3"/>
  <path fill="#5a7a6d" d="M555 262 575 260 728 160 733 200 575 306 535 275Z"/><path fill="#a3cdbb" d="M520 155 610 95Q650 62 690 95L725 130Q738 150 725 163L575 262 520 225Z"/><path fill="#5a7a6d" d="M575 262 723 163V207L575 306Z"/>
  <path fill="#58796c" d="M247 350 315 418Q330 425 352 418L520 305V342L352 455Q335 465 315 458L250 400Z"/><path fill="#a3cdbb" d="M250 335 440 208 520 298 518 310 352 418Q330 428 313 415L250 362Q242 348 250 335Z"/><path fill="none" d="M313 416 318 458M352 418V456"/>
  <path fill="#587a6d" d="M587 665 655 722Q670 732 690 722L1065 460 1070 505 690 762Q670 772 652 762L590 705Z"/><path fill="#a3cdbb" d="M590 645 945 402Q985 365 1025 402L1062 438Q1072 455 1060 468L690 722Q668 732 652 720L590 670Q582 658 590 645Z"/><path fill="none" d="M652 722V762M690 722V762M1060 468V512"/>
  <use href="#stack" x="493" y="218"/><use href="#stack" x="832" y="526"/><use href="#cap" x="646" y="119"/><use href="#cap" x="984" y="425"/>
 </g>
 </svg>
 </div>
 <svg class="triad position-absolute" width="80" height="75" viewBox="0 0 80 75" role="img" aria-label="坐标轴"><path d="M21 48 42 70" stroke="#2020c0" stroke-width="8"/><path d="M52 80 35 74 48 62Z" fill="#1818a8"/><path d="M20 48 48 29" stroke="#c61c1c" stroke-width="7"/><path d="M62 19 44 22 51 36Z" fill="#9b1616"/><path d="M20 49 17 22" stroke="#14591a" stroke-width="7"/><path d="M16 12 25 27 20 33H14L9 27Z" fill="#176b1e"/><text x="11" y="13" font-family="Liberation Serif" font-size="16" fill="#178a1c">Y</text><text x="58" y="22" font-family="Liberation Serif" font-size="18" fill="#f01818">X</text></svg>
</main>

<script>
const C=' (默认<<默认>_显示状态 1>)', G='(-) GB / T70．1-2000内六角圆柱头螺钉M';
const rows=[['asm','装配  (默认<<默认>_外观 显示状态>)'],['hist','历史记录'],['sens','传感器'],['note','注解',1],['plane','前视基准面'],['plane','上视基准面'],['plane','右视基准面'],['origin','原点'],
...['(固定) 铣夹具体<1>'+C,'定位键<1>'+C,G,'JB / T8018．1-1999V形块24<1> (85<<','(-) 圆柱销5<1>'+C,'(-) 圆柱销5<2>'+C,G,'JB / T8018．1-1999V形块24<2> (85<<',G,G,G,'(-) 圆柱销5<3>'+C,'(-) 圆柱销5<4>'+C,'十字轴<1>'+C,'(-) JB / T8026．4-1999调节支承M10×30','对刀块支架<1>'+C,'(-) 圆形对刀块<1>'+C,G,G,G,'(-) 圆柱销5<7>'+C,'(-) 圆柱销5<8>'+C].map(t=>['part',t,1]),
['ghost','旋转压板<1> (默认<<默认>_显示状态 1'],
...['(-) 双头螺柱<1>'+C,'(-) GB / T41-20001型六角螺母C级M8<1','(-) GB / T850-1998锥面垫圈8×3．2<1>','(-) GB / T849-1998球面垫圈8×4<1> (默','(-) GB / T41-20001型六角螺母C级M8<2','(-) 转轴<1> (默认<<默认>_显示状态 1>','(-) GB / T41-20001型六角螺母C级M8<3','(-) 转轴<2>'].map(t=>['part',t,1])];
const inner={
 hist:'<circle cx="15" cy="15" r="7.500" fill="#fff" stroke="#333" stroke-width="1.600"/><path d="M15 10V15H20" stroke="#333" fill="none" stroke-width="1.400"/><path d="M4 13H12L8 19Z" fill="#2b7599"/>',
 sens:'<circle cx="14" cy="15" r="8" fill="#fff" stroke="#333" stroke-width="1.400"/><circle cx="14" cy="15" r="5.500" fill="none" stroke="#333" stroke-dasharray="1 3"/><path d="M12 18 18 10" stroke="#2b7599" stroke-width="2"/><path d="M17 17 21 15 20 20Z" fill="#e02a1a"/>',
 note:'<path d="M12 6H17L22 22H24V24H16V22H18L17 19H11L10 22H12V24H5V22H7ZM12 16H16L14 10Z" fill="#4aa3cc" stroke="#123f58"/>'};
const wrap=(c,s)=>'<span class="'+c+'">'+s+'</span>';
const mark=t=>t.replace(/ {2}/g,' \u00a0').split(/(^\(-\)|[<>]+|\/)/).map(s=>
 s==='(-)'?wrap('fix',s):s==='/'?wrap('slash',s):/^[<>]+$/.test(s)?wrap('cmp',s.replace(/</g,'&lt;').replace(/>/g,'&gt;')):s).join('');
document.getElementById('tree').innerHTML=rows.map(([k,t,a],i)=>{
 const icon=inner[k]?'<svg width="28" height="26"><use href="#folder"/>'+inner[k]+'</svg>':'<svg width="28" height="30"><use href="#'+k+'"/></svg>';
 return '<a href="#" role="treeitem" class="node d-flex align-items-center'+(i?'':' root')+'">'+(i?'<span class="arrow">'+(a?'<svg width="7" height="12"><path d="M1 0 7 6 1 12Z" fill="#555"/></svg>':'')+'</span>':'')+'<span class="ico">'+icon+'</span><span>'+mark(t)+'</span></a>';
}).join('');
</script>
</body>
</html>
